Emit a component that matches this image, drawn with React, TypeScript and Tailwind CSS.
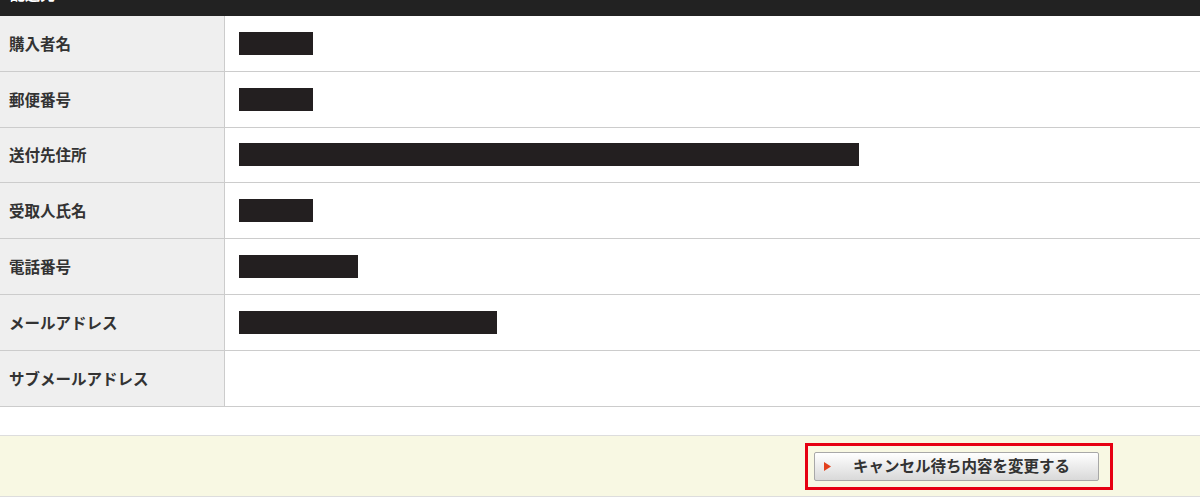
const rows: { label: string; w: number }[] = [
  { label: "購入者名", w: 74 },
  { label: "郵便番号", w: 74 },
  { label: "送付先住所", w: 620 },
  { label: "受取人氏名", w: 74 },
  { label: "電話番号", w: 119 },
  { label: "メールアドレス", w: 258 },
  { label: "サブメールアドレス", w: 0 },
]

export default function App() {
  return (
    <div className="w-[1200px] h-[501px] bg-white overflow-hidden font-['Noto_Sans_CJK_JP','Noto_Sans',sans-serif]">
      {/* section header (scrolled off the top) */}
      <div className="h-[16px] bg-[#222222] overflow-hidden relative">
        <p className="absolute left-[10px] bottom-[13px] text-[15px] font-bold leading-[18px] text-white">配送先</p>
      </div>
      <div className="flex flex-col">
        {rows.map((row) => (
          <div key={row.label} className="flex h-[55.8px] border-b border-[#cccccc] box-border">
            <div className="w-[225px] shrink-0 bg-[#efefef] border-r border-[#cccccc] flex items-center pl-[9px]">
              <span className="text-[15.5px] font-bold text-[#333333]">{row.label}</span>
            </div>
            <div className="flex-1 flex items-center pl-[14px]">
              {row.w > 0 && <div className="h-[23px] bg-[#231f20]" style={{ width: row.w }} />}
            </div>
          </div>
        ))}
      </div>
      <div className="h-[28px]" />
      <div className="h-[62px] bg-[#f8f8e3] border-t border-b border-[#dddddd] flex items-start justify-end pr-[87px] pt-[7px]">
        <div className="border-[3px] border-[#e60012] pl-[6px] pr-[11px] pt-[6px] pb-[6px]">
          <button className="w-[285px] h-[29px] rounded-[2px] border border-[#a8a8a8] bg-gradient-to-b from-[#ffffff] to-[#d9d9d9] flex items-center pl-[9px] text-[#333333]">
            <svg width="7" height="9" viewBox="0 0 7 9" className="shrink-0">
              <polygon points="0,0 7,4.5 0,9" fill="#e2401c" />
            </svg>
            <span className="ml-[22px] text-[15.5px] font-bold leading-none">キャンセル待ち内容を変更する</span>
          </button>
        </div>
      </div>
    </div>
  )
}
